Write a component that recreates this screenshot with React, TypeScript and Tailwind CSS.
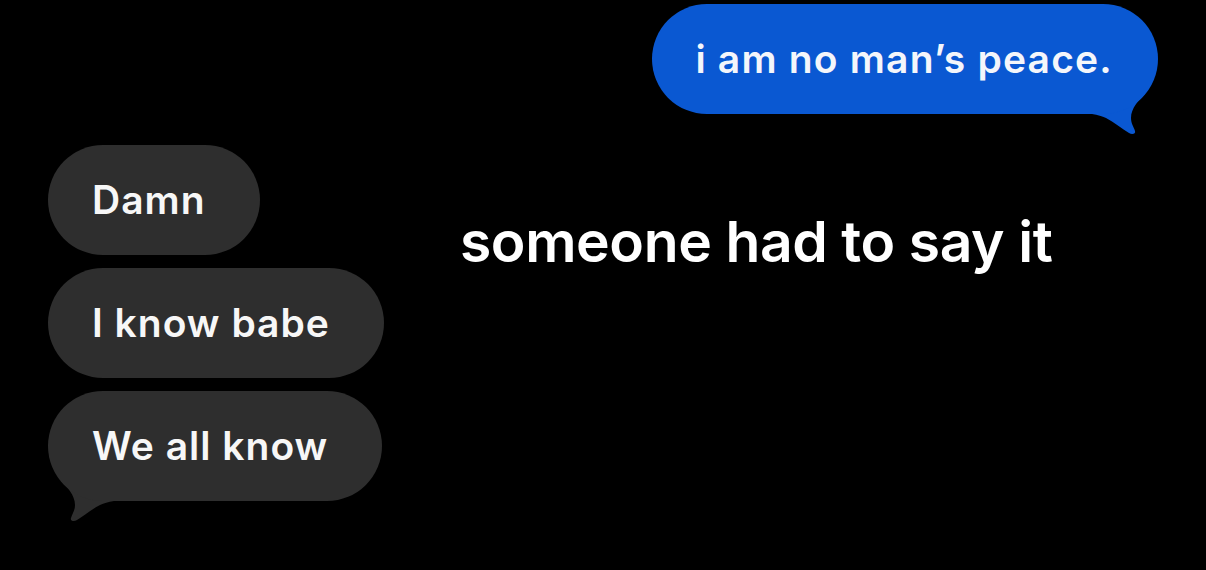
import React from "react";

const font = { fontFamily: "Inter, 'Noto Sans', sans-serif" };

function Tail({ side, color }: { side: "left" | "right"; color: string }) {
  const flip = side === "right";
  return (
    <svg
      width="70"
      height="44"
      viewBox="0 0 70 44"
      className={`absolute bottom-[-24px] ${flip ? "right-0 -scale-x-100" : "left-0"}`}
    >
      <path
        d="M13 0 C 19 6, 27 14, 27 24 C 27 30, 24 33, 23 37 C 22 40, 26 41, 29 39 C 36 35, 44 28, 52 24 C 56 22, 60 21, 66 20 L 66 0 Z"
        fill={color}
      />
    </svg>
  );
}

function Incoming({ text, tail }: { text: string; tail?: boolean }) {
  return (
    <div className="relative self-start">
      <div className="relative z-10 h-[110px] flex items-center rounded-full bg-[#2e2e2e] pl-[44px] pr-[54px] text-[39px] font-semibold text-[#f7f7f7] tracking-[1px]">
        {text}
      </div>
      {tail && <Tail side="left" color="#2e2e2e" />}
    </div>
  );
}

export default function App() {
  return (
    <div style={font} className="w-[1206px] h-[570px] bg-black overflow-hidden pt-[4px]">
      <div className="flex justify-end pr-[48px]">
        <div className="relative">
          <div className="relative z-10 h-[110px] flex items-center rounded-full bg-[#0a58d2] pl-[43px] pr-[45px] text-[39px] font-semibold text-[#f4f6fb] tracking-[1.2px]">
            i am no man’s peace.
          </div>
          <Tail side="right" color="#0a58d2" />
        </div>
      </div>
      <div className="flex pl-[48px] mt-[31px]">
        <div className="flex flex-col gap-[13px]">
          <Incoming text="Damn" />
          <Incoming text="I know babe" />
          <Incoming text="We all know" tail />
        </div>
        <div className="ml-[76px] mt-[68px] text-[57px] leading-none font-semibold text-white tracking-[-0.4px]">
          someone had to say it
        </div>
      </div>
    </div>
  );
}
